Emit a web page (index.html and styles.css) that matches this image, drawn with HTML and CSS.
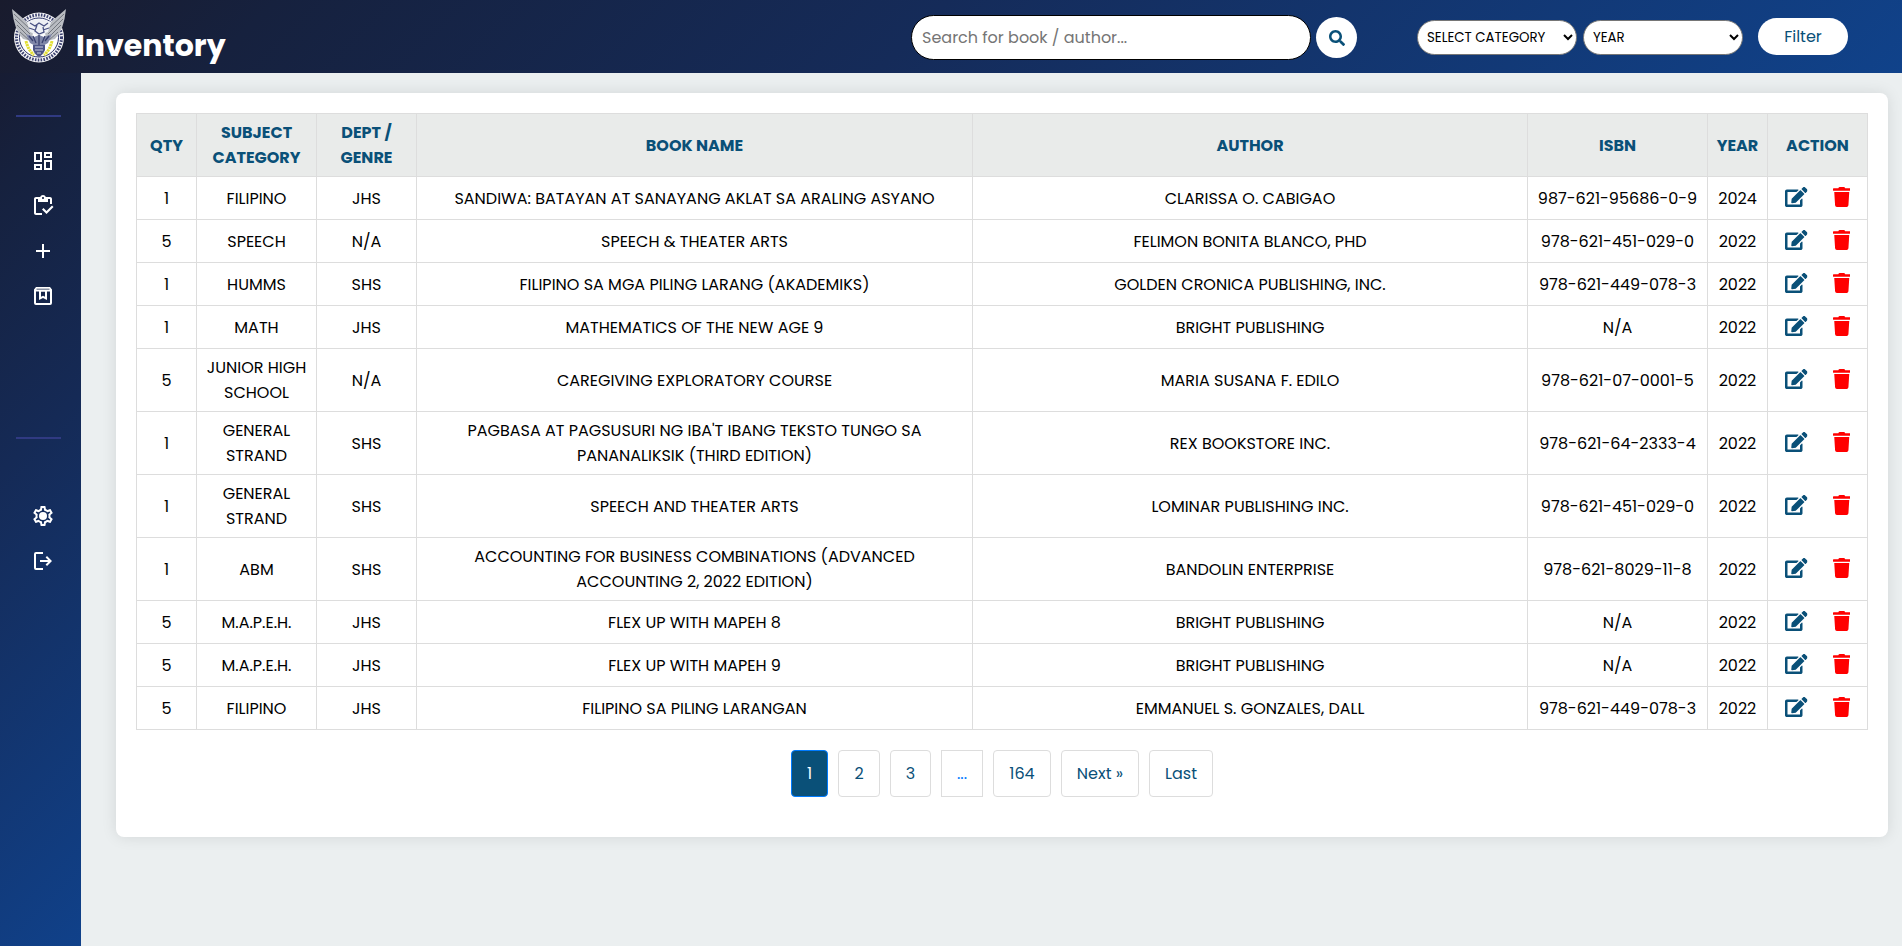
FILE: index.html
```html
<!DOCTYPE html>
<html lang="en">
<head>
<meta charset="utf-8">
<title>Inventory</title>
<link rel="stylesheet" href="styles.css">
</head>
<body>
<svg class="defs" width="0" height="0">
  <symbol id="edit" viewBox="0 0 576 512"><path d="M402.6 83.2l90.2 90.2c3.8 3.8 3.8 10 0 13.8L274.4 405.6l-92.8 10.3c-12.4 1.4-22.9-9.1-21.5-21.5l10.3-92.8L388.8 83.2c3.8-3.8 10-3.8 13.8 0zm162-22.9l-48.8-48.8c-15.2-15.2-39.9-15.2-55.2 0l-35.4 35.4c-3.8 3.8-3.8 10 0 13.8l90.2 90.2c3.8 3.8 10 3.8 13.8 0l35.4-35.4c15.2-15.3 15.2-40 0-55.2zM384 346.2V448H64V128h229.8c3.2 0 6.2-1.3 8.5-3.5l40-40c7.6-7.6 2.2-20.5-8.5-20.5H48C21.5 64 0 85.5 0 112v352c0 26.5 21.5 48 48 48h352c26.5 0 48-21.5 48-48V306.2c0-10.7-12.9-16-20.5-8.5l-40 40c-2.2 2.3-3.5 5.3-3.5 8.5z"/></symbol>
  <symbol id="trash" viewBox="0 0 448 512"><path d="M432 32H312l-9.4-18.7A24 24 0 0 0 281.1 0H166.8a23.72 23.72 0 0 0-21.4 13.3L136 32H16A16 16 0 0 0 0 48v32a16 16 0 0 0 16 16h416a16 16 0 0 0 16-16V48a16 16 0 0 0-16-16zM53.2 467a48 48 0 0 0 47.9 45h245.8a48 48 0 0 0 47.9-45L416 128H32z"/></symbol>
</svg>
<header class="topbar">
  <div class="brand">
    <svg class="logo" viewBox="0 0 54 56">
      <circle cx="27" cy="29.5" r="25" fill="#f4f4f6"/>
      <circle cx="27" cy="29.5" r="22.500" fill="none" stroke="#3c4270" stroke-width="3" stroke-dasharray="1.6 1.3"/>
      <circle cx="27" cy="29.5" r="19.5" fill="#fff" stroke="#2c3468" stroke-width="1"/>
      <path d="M0 1L14 13 21 24 20 33 11 31Q2 22 0 1zM54 1L40 13 33 24 34 33 43 31Q52 22 54 1z" fill="#b9bcc2"/>
      <path d="M2 6L18 21M3 11L18 26M5 17L18 30M8 24L18 33M52 6L36 21M51 11L36 26M49 17L36 30M46 24L36 33" stroke="#73777f" stroke-width="1"/>
      <path d="M15 14Q27 8 39 14L36 24 27 28 18 24z" fill="#eef0f4"/>
      <path d="M18 15l5 3 4-3 5 3 4-3M17 20l6 2M31 22l6-2M25 17l-2 6 4 3 5-2-1-5" fill="none" stroke="#4a5284" stroke-width="1.3"/>
      <path d="M14 26l8 3 5-2 5 2 8-3-4 9-9 5-9-5z" fill="#7f86a8"/>
      <path d="M17 28l4 5M21 28l3 7M27 27v10M33 28l-3 7M37 28l-4 5" stroke="#39416f" stroke-width="1.3"/>
      <path d="M14 33q2 9 8 14M40 33q-2 9-8 14" fill="none" stroke="#e3df35" stroke-width="3" stroke-dasharray="2.4 .6"/>
      <path d="M21 37h12v5q-2 5-6 7-4-2-6-7z" fill="#4c5487"/>
      <path d="M23 39h8M23 42h8M25 45h4" stroke="#d6d9e6" stroke-width=".9"/>
    </svg>
    <h1 class="title">Inventory</h1>
  </div>
  <form class="search">
    <input class="search-input" type="text" placeholder="Search for book / author...">
    <button class="search-btn" type="button" aria-label="Search"><svg width="16" height="16" viewBox="0 0 512 512"><path d="M505 442.7L405.3 343c-4.5-4.5-10.6-7-17-7H372c27.6-35.3 44-79.7 44-128C416 93.1 322.9 0 208 0S0 93.1 0 208s93.1 208 208 208c48.3 0 92.7-16.4 128-44v16.3c0 6.4 2.5 12.5 7 17l99.7 99.7c9.4 9.4 24.6 9.4 33.9 0l28.3-28.3c9.4-9.4 9.4-24.6.1-34zM208 336c-70.7 0-128-57.2-128-128 0-70.7 57.2-128 128-128 70.7 0 128 57.2 128 128 0 70.7-57.2 128-128 128z"/></svg></button>
  </form>
  <form class="filters">
    <select class="select"><option>SELECT CATEGORY</option></select>
    <select class="select"><option>YEAR</option></select>
    <button class="filter-btn" type="button">Filter</button>
  </form>
</header>
<div class="layout">
  <nav class="sidebar">
    <hr class="rule">
    <div class="menu menu-main">
      <svg class="icon" viewBox="0 0 24 24"><path d="M19 5v2h-4V5h4M9 5v6H5V5h4m10 8v6h-4v-6h4M9 17v2H5v-2h4M21 3h-8v6h8V3zM11 3H3v10h8V3zm10 8h-8v10h8V11zm-10 4H3v6h8v-6z"/></svg>
      <svg class="icon" viewBox="0 0 24 24"><path d="M5 5h2v3h10V5h2v5h2V5c0-1.1-.9-2-2-2h-4.18C14.4 1.84 13.3 1 12 1s-2.4.84-2.82 2H5c-1.1 0-2 .9-2 2v14c0 1.1.9 2 2 2h6v-2H5V5zm7-2c.55 0 1 .45 1 1s-.45 1-1 1-1-.45-1-1 .45-1 1-1z"/><path d="M21 11.5 15.51 17l-3.01-3L11 15.5l4.51 4.5L22.5 13z"/></svg>
      <svg class="icon" viewBox="0 0 24 24"><path d="M19 13h-6v6h-2v-6H5v-2h6V5h2v6h6z"/></svg>
      <svg class="icon" viewBox="0 0 24 24"><path fill-rule="evenodd" d="M5 3h14l2 2.500V19a2 2 0 0 1-2 2H5a2 2 0 0 1-2-2V5.500zM5.500 4.800v.7h13v-.7zM5 7.500V19h14V7.500z"/><path d="M8 7h8v9l-4-2-4 2zm2 .5v5.300l2-1 2 1V7.500z"/></svg>
    </div>
    <hr class="rule">
    <div class="menu menu-foot">
      <svg class="icon" viewBox="0 0 24 24"><path d="M19.430 12.980c.04-.32.07-.64.07-.98s-.03-.66-.07-.98l2.110-1.650c.19-.15.24-.42.12-.64l-2-3.460c-.12-.22-.39-.3-.61-.22l-2.490 1c-.52-.4-1.080-.73-1.690-.98l-.38-2.650A.488.488 0 0 0 14 2h-4c-.25 0-.46.18-.49.42l-.38 2.650c-.61.25-1.170.59-1.690.98l-2.490-1c-.23-.09-.49 0-.61.22l-2 3.460c-.13.22-.07.49.12.64l2.110 1.650c-.04.32-.07.65-.07.98s.03.66.07.98l-2.110 1.650c-.19.15-.24.42-.12.64l2 3.460c.12.22.39.3.61.22l2.490-1c.52.4 1.080.73 1.690.98l.38 2.650c.03.24.24.42.49.42h4c.25 0 .46-.18.49-.42l.38-2.650c.61-.25 1.170-.59 1.690-.98l2.490 1c.23.09.49 0 .61-.22l2-3.460c.12-.22.07-.49-.12-.64zm-1.980-1.710c.04.31.05.52.05.73s-.02.43-.05.73l-.14 1.130.89.7 1.080.84-.7 1.210-1.270-.51-1.040-.42-.9.68c-.43.32-.84.56-1.250.73l-1.060.43-.16 1.130-.2 1.350h-1.400l-.19-1.350-.16-1.130-1.060-.43c-.43-.18-.83-.41-1.230-.71l-.91-.7-1.060.43-1.270.51-.7-1.210 1.080-.84.89-.7-.14-1.130c-.03-.31-.05-.54-.05-.74s.02-.43.05-.73l.14-1.130-.89-.7-1.080-.84.7-1.210 1.270.51 1.040.42.9-.68c.43-.32.84-.56 1.250-.73l1.060-.43.16-1.130.2-1.350h1.390l.19 1.350.16 1.130 1.060.43c.43.18.83.41 1.230.71l.91.7 1.060-.43 1.270-.51.7 1.210-1.070.85-.89.7z"/><circle cx="12" cy="12" r="4"/></svg>
      <svg class="icon" viewBox="0 0 24 24"><path d="M5 3a2 2 0 0 0-2 2v14a2 2 0 0 0 2 2h7v-2H5V5h7V3zM16 7l-1.400 1.450L17.150 11H9v2h8.150l-2.550 2.550L16 17l5-5z"/></svg>
    </div>
  </nav>
  <main class="content">
    <section class="card">
      <table class="books">
        <colgroup><col class="c-qty"><col class="c-subject"><col class="c-dept"><col class="c-book"><col class="c-author"><col class="c-isbn"><col class="c-year"><col class="c-action"></colgroup>
        <thead><tr><th>QTY</th><th>SUBJECT CATEGORY</th><th>DEPT / GENRE</th><th>BOOK NAME</th><th>AUTHOR</th><th>ISBN</th><th>YEAR</th><th>ACTION</th></tr></thead>
        <tbody>
          <tr><td>1</td><td>FILIPINO</td><td>JHS</td><td>SANDIWA: BATAYAN AT SANAYANG AKLAT SA ARALING ASYANO</td><td>CLARISSA O. CABIGAO</td><td>987-621-95686-0-9</td><td>2024</td><td><div class="actions"><svg class="edit"><use href="#edit"/></svg><svg class="trash"><use href="#trash"/></svg></div></td></tr>
          <tr><td>5</td><td>SPEECH</td><td>N/A</td><td>SPEECH &amp; THEATER ARTS</td><td>FELIMON BONITA BLANCO, PHD</td><td>978-621-451-029-0</td><td>2022</td><td><div class="actions"><svg class="edit"><use href="#edit"/></svg><svg class="trash"><use href="#trash"/></svg></div></td></tr>
          <tr><td>1</td><td>HUMMS</td><td>SHS</td><td>FILIPINO SA MGA PILING LARANG (AKADEMIKS)</td><td>GOLDEN CRONICA PUBLISHING, INC.</td><td>978-621-449-078-3</td><td>2022</td><td><div class="actions"><svg class="edit"><use href="#edit"/></svg><svg class="trash"><use href="#trash"/></svg></div></td></tr>
          <tr><td>1</td><td>MATH</td><td>JHS</td><td>MATHEMATICS OF THE NEW AGE 9</td><td>BRIGHT PUBLISHING</td><td>N/A</td><td>2022</td><td><div class="actions"><svg class="edit"><use href="#edit"/></svg><svg class="trash"><use href="#trash"/></svg></div></td></tr>
          <tr class="tall"><td>5</td><td>JUNIOR HIGH SCHOOL</td><td>N/A</td><td>CAREGIVING EXPLORATORY COURSE</td><td>MARIA SUSANA F. EDILO</td><td>978-621-07-0001-5</td><td>2022</td><td><div class="actions"><svg class="edit"><use href="#edit"/></svg><svg class="trash"><use href="#trash"/></svg></div></td></tr>
          <tr class="tall"><td>1</td><td>GENERAL STRAND</td><td>SHS</td><td>PAGBASA AT PAGSUSURI NG IBA'T IBANG TEKSTO TUNGO SA<br>PANANALIKSIK (THIRD EDITION)</td><td>REX BOOKSTORE INC.</td><td>978-621-64-2333-4</td><td>2022</td><td><div class="actions"><svg class="edit"><use href="#edit"/></svg><svg class="trash"><use href="#trash"/></svg></div></td></tr>
          <tr class="tall"><td>1</td><td>GENERAL STRAND</td><td>SHS</td><td>SPEECH AND THEATER ARTS</td><td>LOMINAR PUBLISHING INC.</td><td>978-621-451-029-0</td><td>2022</td><td><div class="actions"><svg class="edit"><use href="#edit"/></svg><svg class="trash"><use href="#trash"/></svg></div></td></tr>
          <tr class="tall"><td>1</td><td>ABM</td><td>SHS</td><td>ACCOUNTING FOR BUSINESS COMBINATIONS (ADVANCED<br>ACCOUNTING 2, 2022 EDITION)</td><td>BANDOLIN ENTERPRISE</td><td>978-621-8029-11-8</td><td>2022</td><td><div class="actions"><svg class="edit"><use href="#edit"/></svg><svg class="trash"><use href="#trash"/></svg></div></td></tr>
          <tr><td>5</td><td>M.A.P.E.H.</td><td>JHS</td><td>FLEX UP WITH MAPEH 8</td><td>BRIGHT PUBLISHING</td><td>N/A</td><td>2022</td><td><div class="actions"><svg class="edit"><use href="#edit"/></svg><svg class="trash"><use href="#trash"/></svg></div></td></tr>
          <tr><td>5</td><td>M.A.P.E.H.</td><td>JHS</td><td>FLEX UP WITH MAPEH 9</td><td>BRIGHT PUBLISHING</td><td>N/A</td><td>2022</td><td><div class="actions"><svg class="edit"><use href="#edit"/></svg><svg class="trash"><use href="#trash"/></svg></div></td></tr>
          <tr><td>5</td><td>FILIPINO</td><td>JHS</td><td>FILIPINO SA PILING LARANGAN</td><td>EMMANUEL S. GONZALES, DALL</td><td>978-621-449-078-3</td><td>2022</td><td><div class="actions"><svg class="edit"><use href="#edit"/></svg><svg class="trash"><use href="#trash"/></svg></div></td></tr>
        </tbody>
      </table>
      <div class="pagination">
        <a class="page w37 active">1</a><a class="page w42">2</a><a class="page w41">3</a><a class="page w42 dots">...</a><a class="page w58">164</a><a class="page w78">Next »</a><a class="page w64">Last</a>
      </div>
    </section>
  </main>
</div>
</body>
</html>
```
FILE: styles.css
```css
* { box-sizing: border-box; margin: 0; padding: 0; }
html, body { height: 100%; overflow: hidden; }
body { display: flex; flex-direction: column; background: #ebeff0; color: #000; font: 16px/25px "Poppins", "Inter", sans-serif; }
.defs { position: absolute; }
.topbar { flex: none; height: 73px; display: flex; align-items: flex-start; background: linear-gradient(135deg, #191b2d, #16213e 14%, #152b59 48%, #10428a); }
.brand { width: 911px; display: flex; padding: 8px 0 0 12px; }
.logo { width: 54px; height: 56px; }
.title { margin: 15px 0 0 10px; font-size: 30px; line-height: 45px; font-weight: 700; color: #fff; }
.search { display: flex; align-items: center; gap: 5px; margin-top: 15px; width: 506px; }
.search-input { width: 400px; height: 45px; padding: 0 10px; border: 1px solid #000; border-radius: 25px; background: #fff; font: inherit; }
.search-input::placeholder { color: #757575; }
.search-btn { width: 41px; height: 41px; border: 0; border-radius: 50%; background: #fff; fill: #0a5078; display: grid; place-items: center; }
.filters { display: flex; gap: 6px; margin-top: 18px; }
.select { width: 160px; height: 35px; margin-top: 2px; padding: 0 5px; border: 1px solid #767676; border-radius: 20px; background: #fff; color: #000; font: 13.333px "Poppins", "Inter", sans-serif; }
.filter-btn { width: 90px; height: 37px; margin-left: 9px; border: 0; border-radius: 20px; background: #fff; color: #0a5078; font: inherit; }
.layout { flex: 1; display: flex; }
.sidebar { flex: none; width: 81px; padding-top: 42px; background: linear-gradient(135deg, #171c33, #16213e 12%, #152a56 42%, #10418a); }
.rule { width: 45px; height: 2px; margin-left: 16px; border: 0; background: #303a82; }
.menu { display: flex; flex-direction: column; gap: 21px; padding-left: 31px; }
.menu-main { padding-top: 32px; height: 320px; }
.menu-foot { padding-top: 65px; }
.icon { width: 24px; height: 24px; fill: #fff; }
.content { flex: 1; padding: 20px 14px 0 35px; }
.card { height: 744px; padding: 20px; border-radius: 8px; background: #fff; box-shadow: 0 0 15px rgba(0, 0, 0, .1); }
.books { width: 1732px; table-layout: fixed; border-collapse: collapse; text-align: center; }
.c-qty, .c-year { width: 60px; }
.c-subject { width: 120px; }
.c-dept, .c-action { width: 100px; }
.c-book { width: 556px; }
.c-author { width: 555px; }
.c-isbn { width: 180px; }
.books th, .books td { height: 43px; padding: 0 8px; border: 1px solid #ddd; vertical-align: middle; }
.books th { height: 63px; background: #e9ebea; color: #0a5078; font-weight: 700; }
.books .tall td { height: 63px; }
.actions { display: flex; justify-content: center; gap: 25px; padding-bottom: 2px; }
.edit { width: 22.5px; height: 20px; fill: #0a5078; }
.trash { width: 17.5px; height: 20px; fill: #f00; }
.pagination { display: flex; justify-content: center; gap: 10px; margin-top: 20px; }
.page { height: 47px; border: 1px solid #ddd; border-radius: 4px; color: #0a5078; line-height: 45px; text-align: center; }
.page.active { background: #0a5078; border-color: #007bff; color: #fff; }
.page.dots { border-radius: 0; color: #007bff; }
.w37 { width: 37px; }
.w41 { width: 41px; }
.w42 { width: 42px; }
.w58 { width: 58px; }
.w64 { width: 64px; }
.w78 { width: 78px; }
```
